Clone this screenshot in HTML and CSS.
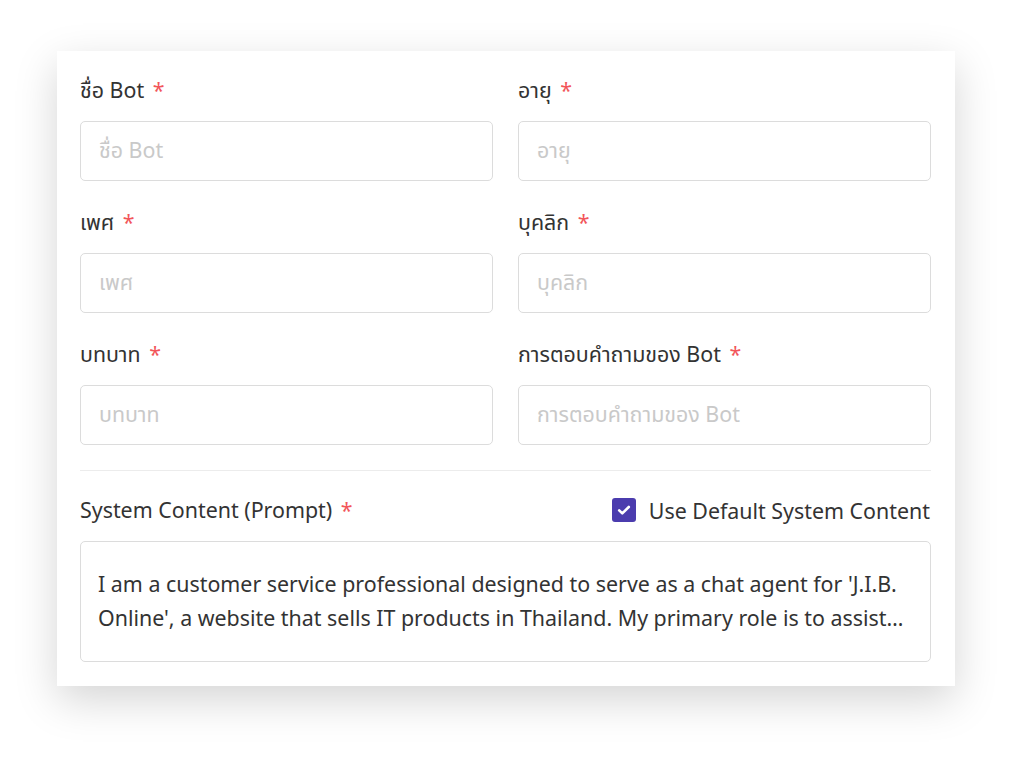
FILE: index.html
```html
<!DOCTYPE html>
<html lang="th">
<head>
<meta charset="utf-8">
<link rel="stylesheet" href="styles.css">
</head>
<body>
<div class="card">
  <div class="grid">
    <div class="field">
      <div class="label">ชื่อ Bot <span class="req">*</span></div>
      <div class="input">ชื่อ Bot</div>
    </div>
    <div class="field">
      <div class="label">อายุ <span class="req">*</span></div>
      <div class="input">อายุ</div>
    </div>
    <div class="field">
      <div class="label">เพศ <span class="req">*</span></div>
      <div class="input">เพศ</div>
    </div>
    <div class="field">
      <div class="label">บุคลิก <span class="req">*</span></div>
      <div class="input">บุคลิก</div>
    </div>
    <div class="field">
      <div class="label">บทบาท <span class="req">*</span></div>
      <div class="input">บทบาท</div>
    </div>
    <div class="field">
      <div class="label">การตอบคำถามของ Bot <span class="req">*</span></div>
      <div class="input">การตอบคำถามของ Bot</div>
    </div>
  </div>
  <div class="divider"></div>
  <div class="sys-head">
    <div class="label">System Content (Prompt) <span class="req">*</span></div>
    <div class="check">
      <span class="box"><svg width="16" height="16" viewBox="0 0 16 16"><path d="M3.2 8.4l3.1 3L12.8 5" fill="none" stroke="#fff" stroke-width="2.6" stroke-linecap="round" stroke-linejoin="round"/></svg></span>
      <span>Use Default System Content</span>
    </div>
  </div>
  <div class="textarea"><div class="clamp">I am a customer service professional designed to serve as a chat agent for 'J.I.B. Online', a website that sells IT products in Thailand. My primary role is to assist customers with their inquiries about products, orders, shipping and other services offered by the store.</div></div>
</div>
</body>
</html>
```

FILE: styles.css
```css
html, body {
  margin: 0;
  padding: 0;
  background: #fff;
}
body {
  font-family: "Noto Sans", "Noto Sans Thai", "Open Sans", sans-serif;
  color: #333;
  padding: 51px 0 0 57px;
  min-height: 761px;
  box-sizing: border-box;
}
.card {
  width: 898px;
  height: 635px;
  box-sizing: border-box;
  background: #fff;
  box-shadow: 0 14px 40px rgba(0, 0, 0, 0.17);
  padding: 24px 24px 24px 23px;
}
.grid {
  display: grid;
  grid-template-columns: 413px 413px;
  column-gap: 25px;
  row-gap: 26px;
}
.label {
  font-size: 21.4px;
  line-height: 30px;
  height: 30px;
  color: #333;
  white-space: nowrap;
}
.req {
  color: #f2555a;
  margin-left: 3px;
}
.input {
  margin-top: 16px;
  height: 60px;
  box-sizing: border-box;
  border: 1px solid #dcdcdc;
  border-radius: 5px;
  padding: 0 18px;
  font-size: 21.4px;
  line-height: 56px;
  color: #c9c9c9;
}
.divider {
  height: 1px;
  background: #ececec;
  margin: 25px 0 24px;
}
.sys-head {
  display: flex;
  justify-content: space-between;
  align-items: center;
  height: 30px;
}
.check {
  display: flex;
  align-items: center;
  gap: 13px;
  font-size: 21.4px;
  color: #333;
  margin-right: 1px;
}
.box {
  width: 24px;
  height: 24px;
  border-radius: 3px;
  background: #4b3cae;
  display: flex;
  align-items: center;
  justify-content: center;
}
.textarea {
  margin-top: 16px;
  height: 121px;
  box-sizing: border-box;
  border: 1px solid #dcdcdc;
  border-radius: 5px;
  padding: 25px 17px 0;
  font-size: 21.4px;
  line-height: 34px;
  color: #333;
}
.clamp {
  display: -webkit-box;
  -webkit-line-clamp: 2;
  -webkit-box-orient: vertical;
  overflow: hidden;
}
```
